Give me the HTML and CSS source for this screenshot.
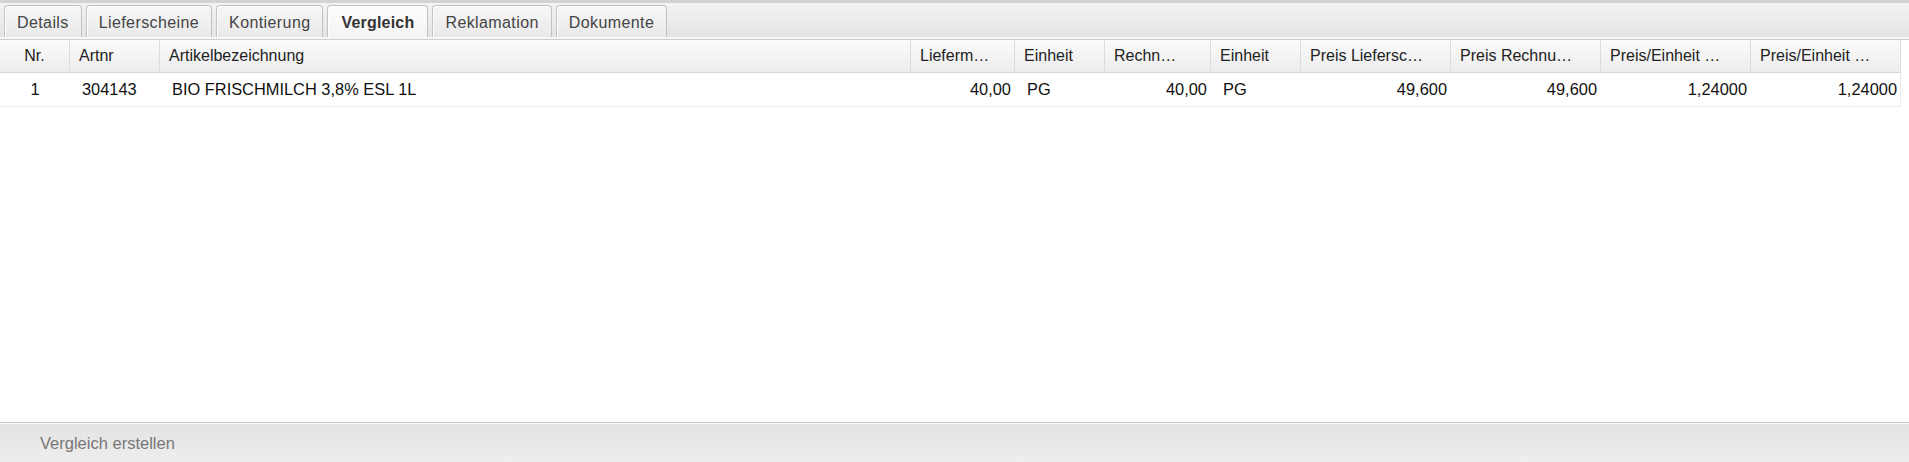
FILE: index.html
```html
<!DOCTYPE html>
<html lang="de">
<head>
<meta charset="utf-8">
<title>Vergleich</title>
<link rel="stylesheet" href="styles.css">
</head>
<body>
<div class="page">
  <div class="tabbar">
    <div class="tab">Details</div>
    <div class="tab">Lieferscheine</div>
    <div class="tab">Kontierung</div>
    <div class="tab active">Vergleich</div>
    <div class="tab">Reklamation</div>
    <div class="tab">Dokumente</div>
  </div>
  <div class="grid">
    <div class="row head">
      <div class="cell c-nr center">Nr.</div>
      <div class="cell c-art">Artnr</div>
      <div class="cell c-bez">Artikelbezeichnung</div>
      <div class="cell c-lm">Lieferm…</div>
      <div class="cell c-eh">Einheit</div>
      <div class="cell c-rm">Rechn…</div>
      <div class="cell c-eh">Einheit</div>
      <div class="cell c-p">Preis Liefersc…</div>
      <div class="cell c-p">Preis Rechnu…</div>
      <div class="cell c-p">Preis/Einheit …</div>
      <div class="cell c-p">Preis/Einheit …</div>
    </div>
    <div class="row data">
      <div class="cell c-nr center">1</div>
      <div class="cell c-art">304143</div>
      <div class="cell c-bez">BIO FRISCHMILCH 3,8% ESL 1L</div>
      <div class="cell c-lm num">40,00</div>
      <div class="cell c-eh">PG</div>
      <div class="cell c-rm num">40,00</div>
      <div class="cell c-eh">PG</div>
      <div class="cell c-p num">49,600</div>
      <div class="cell c-p num">49,600</div>
      <div class="cell c-p num">1,24000</div>
      <div class="cell c-p num">1,24000</div>
    </div>
  </div>
  <div class="footer">
    <span class="action">Vergleich erstellen</span>
  </div>
</div>
</body>
</html>
```
FILE: styles.css
```css
* { box-sizing: border-box; }
html, body { margin: 0; padding: 0; height: 100%; }
body {
  font-family: "Liberation Sans", Arial, sans-serif;
  font-size: 16px;
  color: #222;
  background: #fff;
}
.page {
  height: 100vh;
  display: flex;
  flex-direction: column;
}
.tabbar {
  height: 40px;
  flex: none;
  display: flex;
  align-items: flex-end;
  gap: 4px;
  padding: 0 0 2px 4px;
  border-top: 3px solid #d3d3d3;
  background: linear-gradient(#f3f3f3, #e3e3e3);
  border-bottom: 1px solid #cfcfcf;
  box-shadow: inset 0 -2px 0 #f7f7f7;
}
.tab {
  height: 32px;
  padding: 2px 12px 0;
  display: flex;
  align-items: center;
  border: 1px solid #c2c2c2;
  border-bottom: none;
  border-radius: 4px 4px 0 0;
  background: linear-gradient(#f7f7f7, #e9e9e9);
  color: #444;
  letter-spacing: 0.4px;
  box-shadow: inset 1px 1px 0 #fff;
}
.tab.active {
  background: linear-gradient(#fdfdfd, #f4f4f4);
  color: #333;
  font-weight: bold;
  padding: 2px 13px 0;
  letter-spacing: 0.2px;
}
.grid {
  flex: 1;
}
.row {
  display: flex;
  width: 1901px;
}
.row.head {
  height: 33px;
  background: linear-gradient(#fbfbfb, #ececec);
  border-bottom: 1px solid #d6d6d6;
  color: #222;
}
.row.data {
  height: 34px;
  background: #fff;
  border-bottom: 1px solid #ececec;
  border-right: 1px solid #ececec;
  color: #111;
  font-size: 16.4px;
}
.cell {
  flex: none;
  display: flex;
  align-items: center;
  padding: 0 9px;
  white-space: nowrap;
  overflow: hidden;
}
.head .cell { border-right: 1px solid #dcdcdc; }
.data .cell { padding-left: 12px; }
.cell.center { justify-content: center; padding: 0; }
.data .cell.center { padding: 0; }
.cell.num { justify-content: flex-end; padding-right: 4px; }
.c-nr { width: 70px; }
.c-art { width: 90px; }
.c-bez { width: 751px; }
.c-lm { width: 104px; }
.c-eh { width: 90px; }
.c-rm { width: 106px; }
.c-p { width: 150px; }
.footer {
  flex: none;
  height: 40px;
  border-top: 1px solid #c8c8c8;
  box-shadow: inset 0 1px 0 #fafafa;
  background: linear-gradient(#e3e3e3, #eeeeee);
  display: flex;
  align-items: center;
  padding: 2px 0 0 40px;
  color: #777;
  font-size: 16.5px;
}
```
